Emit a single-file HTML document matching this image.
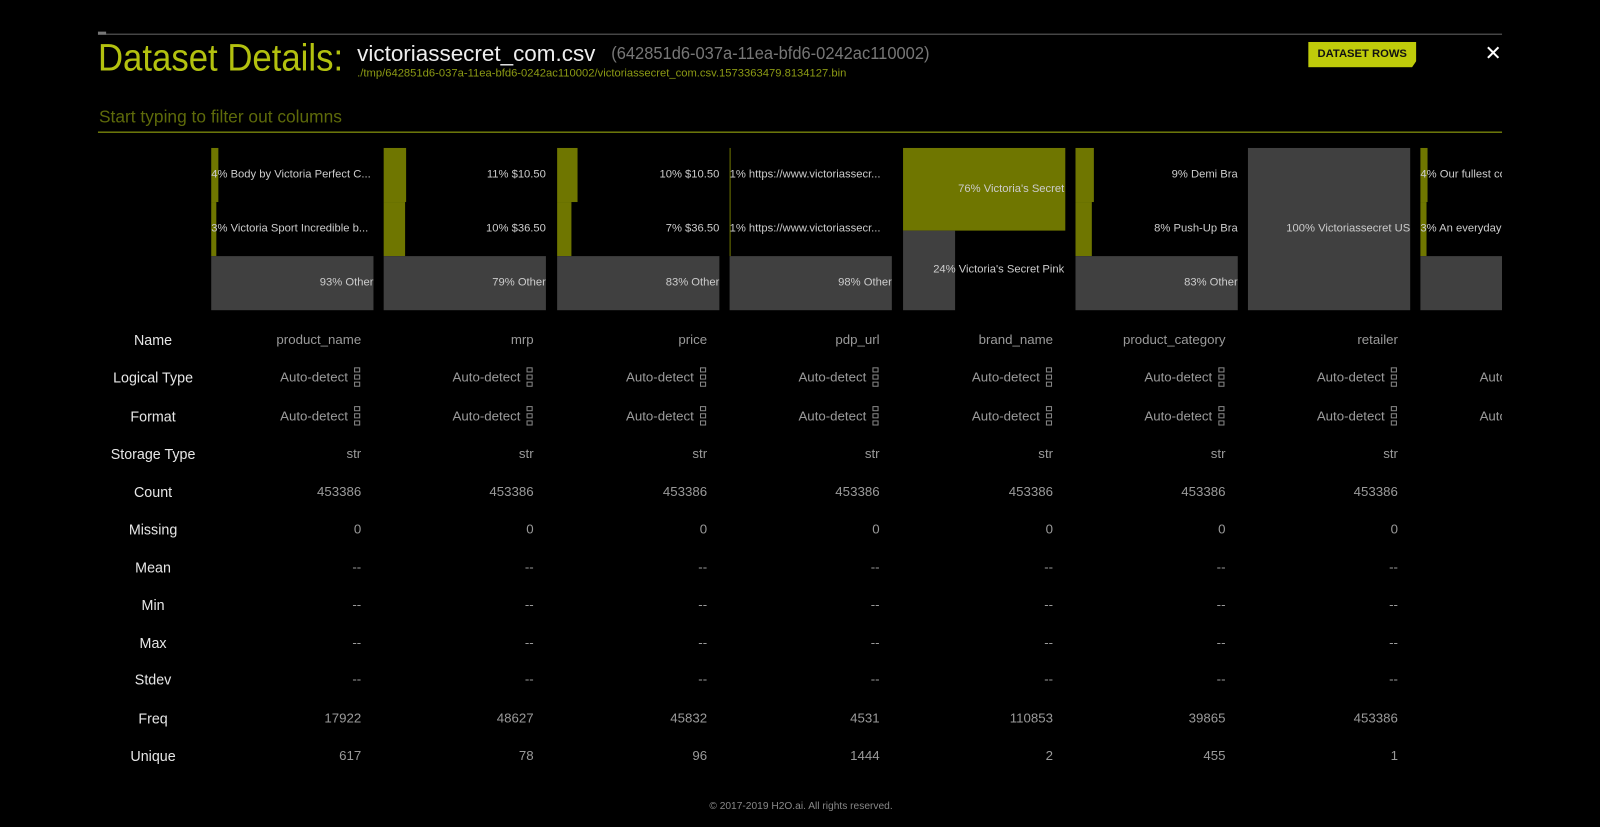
<!DOCTYPE html>
<html><head><meta charset="utf-8"><style>
*{margin:0;padding:0;box-sizing:border-box}
body{width:1600px;height:826px;background:#000;overflow:hidden;position:relative;font-family:"Liberation Sans",sans-serif;color:#aaa}
#w{position:absolute;left:0;top:0;width:1568px;height:810px;transform:scale(1.0204);transform-origin:0 0}
.a{position:absolute;white-space:nowrap}
.clip{position:absolute;left:0;top:0;width:1472px;height:810px;overflow:hidden}
.col{position:absolute;top:145px;width:159px}
.bar{position:absolute;left:0;height:53px}
.ol{background:#6f7600}
.gr{background:#404040}
.bt{position:absolute;left:0;width:159px;height:53px;line-height:53px;font-size:11px;color:#ccc;overflow:hidden;text-overflow:ellipsis;white-space:nowrap}
.r{text-align:right}
.v{position:absolute;left:0;width:147px;text-align:right;font-size:13px;color:#9a9a9a;height:20px;line-height:20px}
.lab{position:absolute;left:96px;width:108px;text-align:center;font-size:14px;color:#e6e6e6;height:20px;line-height:20px}
.ic{display:inline-block;width:7px;height:20px;vertical-align:top;margin-left:6px;position:relative;top:-2px}
.ic i{display:block;width:6px;height:5px;border:1px solid #888;margin-top:2px}
</style></head><body><div id="w">
<div class="a" style="left:96px;top:33px;width:1376px;height:1px;background:#666"></div>
<div class="a" style="left:96px;top:31px;width:8px;height:3px;background:#777"></div>
<div class="a" style="left:96px;top:36px;font-size:37px;color:#b3c10f;transform:scaleX(0.92);transform-origin:0 0">Dataset Details:</div>
<div class="a" style="left:350px;top:40px;font-size:22px;color:#eee">victoriassecret_com.csv</div>
<div class="a" style="left:599px;top:43px;font-size:17px;color:#777;transform:scaleX(0.95);transform-origin:0 0">(642851d6-037a-11ea-bfd6-0242ac110002)</div>
<div class="a" style="left:350px;top:66px;font-size:11px;color:#8c9a14">./tmp/642851d6-037a-11ea-bfd6-0242ac110002/victoriassecret_com.csv.1573363479.8134127.bin</div>
<div class="a" style="left:97px;top:105px;font-size:17px;color:#5e6a0a">Start typing to filter out columns</div>
<div class="a" style="left:96px;top:129px;width:1376px;height:1px;background:#a3b30f"></div>
<div class="a" style="left:1282px;top:41px;width:106px;height:25px;background:#bfcb0a;clip-path:polygon(0 0,100% 0,100% 75%,96% 100%,0 100%);color:#111;font-size:11px;font-weight:bold;text-align:center;line-height:25px">DATASET ROWS</div>
<div class="a" style="left:1455px;top:40px;font-size:20px;color:#fff;font-family:'DejaVu Sans',sans-serif">✕</div>

<div class="clip">
<div class="col" style="left:207px">
<div class="bar ol" style="top:0;width:7px"></div><div class="bar ol" style="top:53px;width:5px"></div><div class="bar gr" style="top:106px;width:159px"></div>
<div class="bt" style="top:0">4% Body by Victoria Perfect C...</div><div class="bt" style="top:53px">3% Victoria Sport Incredible b...</div><div class="bt r" style="top:106px">93% Other</div>
</div>
<div class="col" style="left:376px">
<div class="bar ol" style="top:0;width:22px"></div><div class="bar ol" style="top:53px;width:21px"></div><div class="bar gr" style="top:106px;width:159px"></div>
<div class="bt r" style="top:0">11% $10.50</div><div class="bt r" style="top:53px">10% $36.50</div><div class="bt r" style="top:106px">79% Other</div>
</div>
<div class="col" style="left:546px">
<div class="bar ol" style="top:0;width:20px"></div><div class="bar ol" style="top:53px;width:14px"></div><div class="bar gr" style="top:106px;width:159px"></div>
<div class="bt r" style="top:0">10% $10.50</div><div class="bt r" style="top:53px">7% $36.50</div><div class="bt r" style="top:106px">83% Other</div>
</div>
<div class="col" style="left:715px">
<div class="bar ol" style="top:0;width:1px;height:106px"></div><div class="bar gr" style="top:106px;width:159px"></div>
<div class="bt" style="top:0">1% https://www.victoriassecr...</div><div class="bt" style="top:53px">1% https://www.victoriassecr...</div><div class="bt r" style="top:106px">98% Other</div>
</div>
<div class="col" style="left:885px">
<div class="bar ol" style="top:0;width:159px;height:81px"></div><div class="bar gr" style="top:81px;width:51px;height:78px"></div>
<div class="bt r" style="top:14px;width:158px">76% Victoria's Secret</div><div class="bt r" style="top:93px;width:158px">24% Victoria's Secret Pink</div>
</div>
<div class="col" style="left:1054px">
<div class="bar ol" style="top:0;width:18px"></div><div class="bar ol" style="top:53px;width:16px"></div><div class="bar gr" style="top:106px;width:159px"></div>
<div class="bt r" style="top:0">9% Demi Bra</div><div class="bt r" style="top:53px">8% Push-Up Bra</div><div class="bt r" style="top:106px">83% Other</div>
</div>
<div class="col" style="left:1223px">
<div class="bar gr" style="top:0;width:159px;height:159px"></div>
<div class="bt r" style="top:53px">100% Victoriassecret US</div>
</div>
<div class="col" style="left:1392px">
<div class="bar ol" style="top:0;width:7px"></div><div class="bar ol" style="top:53px;width:6px"></div><div class="bar gr" style="top:106px;width:159px"></div>
<div class="bt" style="top:0;text-overflow:clip">4% Our fullest coverage bra</div><div class="bt" style="top:53px;text-overflow:clip">3% An everyday bra</div>
</div>

<div class="col" style="left:207px;top:0">
<div class="v" style="top:323px">product_name</div>
<div class="v" style="top:360px">Auto-detect<span class="ic"><i></i><i></i><i></i></span></div>
<div class="v" style="top:398px">Auto-detect<span class="ic"><i></i><i></i><i></i></span></div>
<div class="v" style="top:435px">str</div><div class="v" style="top:472px">453386</div><div class="v" style="top:509px">0</div>
<div class="v" style="top:546px">--</div><div class="v" style="top:583px">--</div><div class="v" style="top:620px">--</div><div class="v" style="top:656px">--</div>
<div class="v" style="top:694px">17922</div><div class="v" style="top:731px">617</div>
</div>
<div class="col" style="left:376px;top:0">
<div class="v" style="top:323px">mrp</div>
<div class="v" style="top:360px">Auto-detect<span class="ic"><i></i><i></i><i></i></span></div>
<div class="v" style="top:398px">Auto-detect<span class="ic"><i></i><i></i><i></i></span></div>
<div class="v" style="top:435px">str</div><div class="v" style="top:472px">453386</div><div class="v" style="top:509px">0</div>
<div class="v" style="top:546px">--</div><div class="v" style="top:583px">--</div><div class="v" style="top:620px">--</div><div class="v" style="top:656px">--</div>
<div class="v" style="top:694px">48627</div><div class="v" style="top:731px">78</div>
</div>
<div class="col" style="left:546px;top:0">
<div class="v" style="top:323px">price</div>
<div class="v" style="top:360px">Auto-detect<span class="ic"><i></i><i></i><i></i></span></div>
<div class="v" style="top:398px">Auto-detect<span class="ic"><i></i><i></i><i></i></span></div>
<div class="v" style="top:435px">str</div><div class="v" style="top:472px">453386</div><div class="v" style="top:509px">0</div>
<div class="v" style="top:546px">--</div><div class="v" style="top:583px">--</div><div class="v" style="top:620px">--</div><div class="v" style="top:656px">--</div>
<div class="v" style="top:694px">45832</div><div class="v" style="top:731px">96</div>
</div>
<div class="col" style="left:715px;top:0">
<div class="v" style="top:323px">pdp_url</div>
<div class="v" style="top:360px">Auto-detect<span class="ic"><i></i><i></i><i></i></span></div>
<div class="v" style="top:398px">Auto-detect<span class="ic"><i></i><i></i><i></i></span></div>
<div class="v" style="top:435px">str</div><div class="v" style="top:472px">453386</div><div class="v" style="top:509px">0</div>
<div class="v" style="top:546px">--</div><div class="v" style="top:583px">--</div><div class="v" style="top:620px">--</div><div class="v" style="top:656px">--</div>
<div class="v" style="top:694px">4531</div><div class="v" style="top:731px">1444</div>
</div>
<div class="col" style="left:885px;top:0">
<div class="v" style="top:323px">brand_name</div>
<div class="v" style="top:360px">Auto-detect<span class="ic"><i></i><i></i><i></i></span></div>
<div class="v" style="top:398px">Auto-detect<span class="ic"><i></i><i></i><i></i></span></div>
<div class="v" style="top:435px">str</div><div class="v" style="top:472px">453386</div><div class="v" style="top:509px">0</div>
<div class="v" style="top:546px">--</div><div class="v" style="top:583px">--</div><div class="v" style="top:620px">--</div><div class="v" style="top:656px">--</div>
<div class="v" style="top:694px">110853</div><div class="v" style="top:731px">2</div>
</div>
<div class="col" style="left:1054px;top:0">
<div class="v" style="top:323px">product_category</div>
<div class="v" style="top:360px">Auto-detect<span class="ic"><i></i><i></i><i></i></span></div>
<div class="v" style="top:398px">Auto-detect<span class="ic"><i></i><i></i><i></i></span></div>
<div class="v" style="top:435px">str</div><div class="v" style="top:472px">453386</div><div class="v" style="top:509px">0</div>
<div class="v" style="top:546px">--</div><div class="v" style="top:583px">--</div><div class="v" style="top:620px">--</div><div class="v" style="top:656px">--</div>
<div class="v" style="top:694px">39865</div><div class="v" style="top:731px">455</div>
</div>
<div class="col" style="left:1223px;top:0">
<div class="v" style="top:323px">retailer</div>
<div class="v" style="top:360px">Auto-detect<span class="ic"><i></i><i></i><i></i></span></div>
<div class="v" style="top:398px">Auto-detect<span class="ic"><i></i><i></i><i></i></span></div>
<div class="v" style="top:435px">str</div><div class="v" style="top:472px">453386</div><div class="v" style="top:509px">0</div>
<div class="v" style="top:546px">--</div><div class="v" style="top:583px">--</div><div class="v" style="top:620px">--</div><div class="v" style="top:656px">--</div>
<div class="v" style="top:694px">453386</div><div class="v" style="top:731px">1</div>
</div>
<div class="col" style="left:1392px;top:0">
<div class="v" style="top:323px;text-align:left;left:80px">description</div>
<div class="v" style="top:360px;text-align:left;left:58px">Auto-detect</div>
<div class="v" style="top:398px;text-align:left;left:58px">Auto-detect</div>
</div>
</div>

<div class="lab" style="top:323px">Name</div>
<div class="lab" style="top:360px">Logical Type</div>
<div class="lab" style="top:398px">Format</div>
<div class="lab" style="top:435px">Storage Type</div>
<div class="lab" style="top:472px">Count</div>
<div class="lab" style="top:509px">Missing</div>
<div class="lab" style="top:546px">Mean</div>
<div class="lab" style="top:583px">Min</div>
<div class="lab" style="top:620px">Max</div>
<div class="lab" style="top:656px">Stdev</div>
<div class="lab" style="top:694px">Freq</div>
<div class="lab" style="top:731px">Unique</div>

<div class="a" style="left:0;width:1570px;text-align:center;top:785px;font-size:10px;color:#888">© 2017-2019 H2O.ai. All rights reserved.</div>
</div></body></html>
